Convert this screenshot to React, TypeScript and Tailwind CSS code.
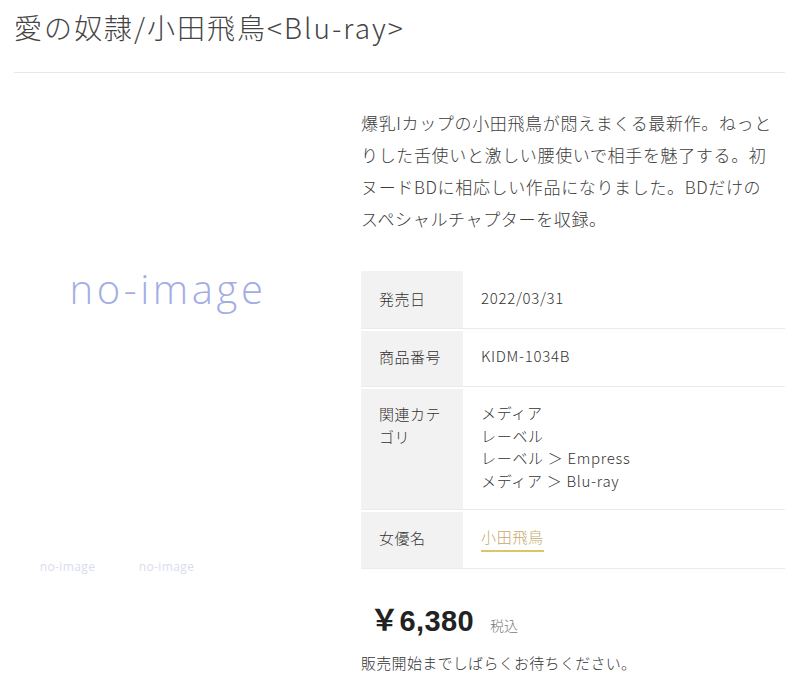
import React from "react";

const jp = { fontFamily: '"Noto Sans CJK JP", "Noto Sans", sans-serif' };

function Row({
  label,
  children,
  h,
  pt,
}: {
  label: React.ReactNode;
  children: React.ReactNode;
  h: string;
  pt: string;
}) {
  return (
    <div className={`flex border-b border-[#ebebeb] mb-[2px] ${h}`}>
      <div className={`w-[102px] shrink-0 bg-[#f2f2f2] pl-[18px] pr-2 ${pt} leading-[23px] tracking-[0.5px]`}>
        {label}
      </div>
      <div className={`flex-1 pl-[18px] ${pt} leading-[22.5px] tracking-[0.7px]`}>{children}</div>
    </div>
  );
}

export default function App() {
  return (
    <div className="w-[807px] h-[689px] bg-white overflow-hidden text-[#333]" style={jp}>
      <div className="pl-[14px] pr-[22px]">
        <div className="border-b border-[#e8e8e8] pt-[7px] pb-[25px]">
          <h1 className="text-[28px] leading-[40px] font-light text-[#444] whitespace-nowrap tracking-[2px]">
            愛の奴隷/小田飛鳥&lt;Blu-ray&gt;
          </h1>
        </div>
        <div className="flex">
          <div className="w-[347px] shrink-0">
            <div className="mt-[62px] w-[308px] h-[308px] flex items-center justify-center">
              <span
                className="text-[40px] text-[#a3ade4] tracking-[3.6px] font-light"
                style={{ fontFamily: '"Open Sans", sans-serif' }}
              >
                no-image
              </span>
            </div>
            <div className="mt-[106px] flex pl-[4px]">
              {[0, 1].map((i) => (
                <div key={i} className="w-[99px] h-[36px] flex items-center justify-center">
                  <span
                    className="text-[12px] text-[#d9dcef] tracking-[0.4px]"
                    style={{ fontFamily: '"Open Sans", sans-serif' }}
                  >
                    no-image
                  </span>
                </div>
              ))}
            </div>
          </div>
          <div className="w-[424px] shrink-0">
            <p className="mt-[34px] text-[17px] leading-[32px] text-[#3c3c3c] font-light whitespace-nowrap tracking-[0.65px]">
              爆乳Iカップの小田飛鳥が悶えまくる最新作。ねっと
              <br />
              りした舌使いと激しい腰使いで相手を魅了する。初
              <br />
              ヌードBDに相応しい作品になりました。BDだけの
              <br />
              スペシャルチャプターを収録。
            </p>
            <div className="mt-[36px] text-[15px] font-light text-[#333]">
              <Row label="発売日" h="h-[58px]" pt="pt-[16px]">
                2022/03/31
              </Row>
              <Row label="商品番号" h="h-[56px]" pt="pt-[14px]">
                KIDM-1034B
              </Row>
              <Row
                label={
                  <>
                    関連カテ
                    <br />
                    ゴリ
                  </>
                }
                h="h-[121px]"
                pt="pt-[13px]"
              >
                <div>メディア</div>
                <div>レーベル</div>
                <div>レーベル ＞ Empress</div>
                <div>メディア ＞ Blu-ray</div>
              </Row>
              <Row label="女優名" h="h-[57px]" pt="pt-[14px]">
                <span className="text-[#c5a86b] border-b-[2px] border-[#d9c667] pb-[3px]">小田飛鳥</span>
              </Row>
            </div>
            <div className="mt-[32px] pl-[9px] flex items-baseline">
              <span
                className="text-[29px] leading-[40px] font-bold text-[#222] tracking-[0.4px]"
                style={{ fontFamily: '"Liberation Sans", "Noto Sans CJK JP", sans-serif' }}
              >
                ￥6,380
              </span>
              <span className="ml-[16px] text-[14px] text-[#777] font-light">税込</span>
            </div>
            <p className="mt-[10px] text-[15px] leading-[24px] font-light text-[#333] tracking-[0.3px]">
              販売開始までしばらくお待ちください。
            </p>
          </div>
        </div>
      </div>
    </div>
  );
}
